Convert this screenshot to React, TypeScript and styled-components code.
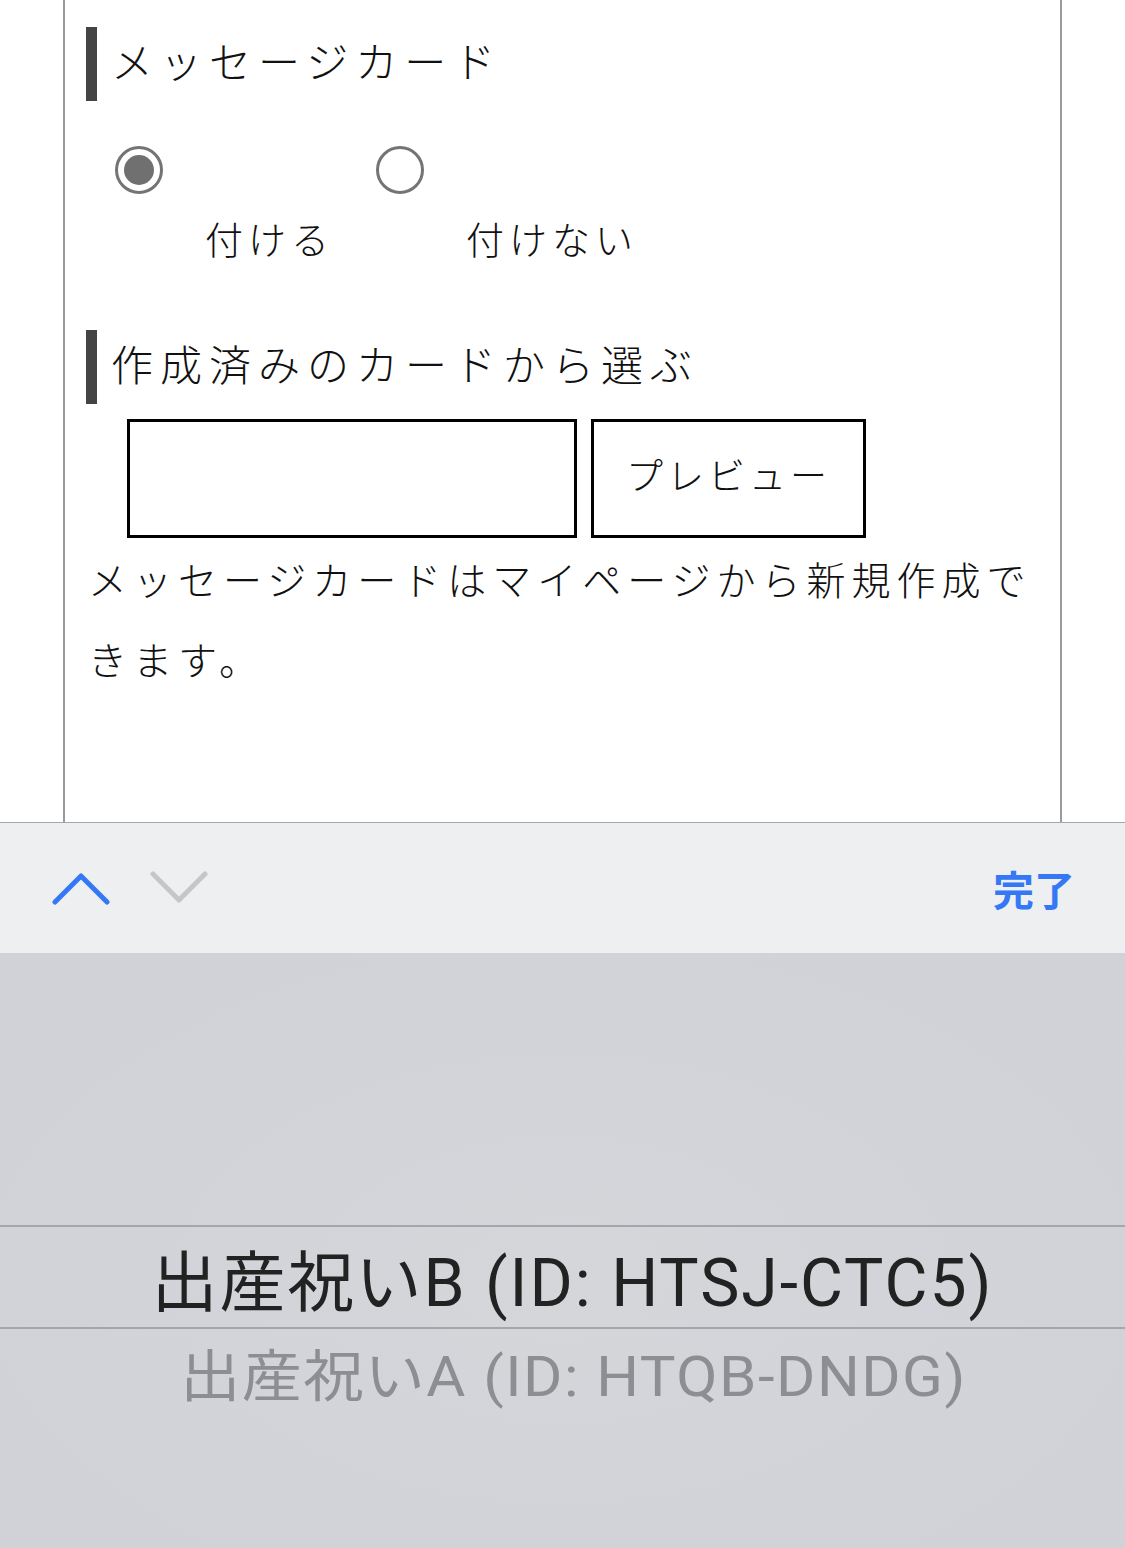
import React from 'react'
import styled, { createGlobalStyle } from 'styled-components'

const GlobalStyle = createGlobalStyle`
  body {
    margin: 0;
    background: #ffffff;
  }
`

const jp = `"Noto Sans CJK JP", "Noto Sans", sans-serif`

const Page = styled.div`
  width: 1125px;
  height: 1548px;
  display: flex;
  flex-direction: column;
  overflow: hidden;
  font-family: ${jp};
  color: #111;
`

const Viewport = styled.div`
  height: 822px;
  flex: none;
  padding-left: 63px;
  box-sizing: border-box;
`

const Card = styled.div`
  width: 999px;
  height: 100%;
  box-sizing: border-box;
  border-left: 2px solid #9b9b9b;
  border-right: 2px solid #9b9b9b;
  padding: 27px 21px 0 21px;
`

const Heading = styled.h2<{ $top?: number }>`
  margin: ${(p) => p.$top || 0}px 0 0 0;
  height: 74px;
  box-sizing: border-box;
  display: flex;
  align-items: center;
  border-left: 11px solid #444;
  padding: 0 0 8px 14px;
  font-size: 42px;
  font-weight: 300;
  letter-spacing: 7px;
  line-height: 1;
`

const RadioGroup = styled.div`
  display: flex;
  padding: 45px 0 0 29px;
`

const Option = styled.label`
  width: 261px;
  display: flex;
  flex-direction: column;
`

const Radio = styled.span<{ $checked?: boolean }>`
  width: 48px;
  height: 48px;
  box-sizing: border-box;
  border: 3px solid #747474;
  border-radius: 50%;
  display: flex;
  align-items: center;
  justify-content: center;
  &::after {
    content: '';
    width: 30px;
    height: 30px;
    border-radius: 50%;
    background: ${(p) => (p.$checked ? '#707070' : 'transparent')};
  }
`

const OptionText = styled.span`
  margin: 22px 0 0 90px;
  font-size: 38px;
  font-weight: 300;
  letter-spacing: 5px;
  line-height: 44px;
  white-space: nowrap;
`

const SelectRow = styled.div`
  display: flex;
  gap: 14px;
  margin: 15px 0 0 41px;
`

const Select = styled.div`
  width: 450px;
  height: 119px;
  box-sizing: border-box;
  border: 3px solid #000;
`

const PreviewButton = styled.button`
  width: 275px;
  height: 119px;
  box-sizing: border-box;
  border: 3px solid #000;
  background: #fff;
  font-family: ${jp};
  font-size: 37px;
  font-weight: 300;
  letter-spacing: 4px;
  color: #111;
  padding: 0 0 10px 0;
`

const Note = styled.p`
  margin: 0;
  padding-left: 2px;
  font-size: 39px;
  font-weight: 300;
  letter-spacing: 6px;
  line-height: 80px;
`

const Toolbar = styled.div`
  height: 131px;
  flex: none;
  box-sizing: border-box;
  border-top: 1px solid #a7a7aa;
  background: #eeeff1;
  display: flex;
  align-items: center;
  padding: 0 50px 0 52px;
`

const Arrows = styled.div`
  display: flex;
  gap: 40px;
  flex: 1;
`

const Done = styled.span`
  color: #3478f6;
  font-size: 41px;
  font-weight: 700;
  font-family: ${jp};
`

const Picker = styled.div`
  flex: 1;
  background: radial-gradient(ellipse at 50% 55%, #d4d6da 0%, #d1d3d8 60%, #d0d2d7 100%);
  padding-top: 272px;
  font-family: Roboto, "Noto Sans CJK JP", sans-serif;
`

const Selected = styled.div`
  height: 104px;
  box-sizing: border-box;
  border-top: 2px solid #a4a6ab;
  border-bottom: 2px solid #a4a6ab;
  display: flex;
  align-items: center;
  justify-content: center;
  padding-left: 20px;
  font-size: 66px;
  letter-spacing: 2px;
  color: #222;
`

const Row = styled.div`
  height: 84px;
  display: flex;
  align-items: center;
  justify-content: center;
  padding-left: 22px;
  font-size: 60px;
  letter-spacing: 1.5px;
  color: #8d8e92;
  transform: scaleY(0.92);
`

const Chevron: React.FC<{ up?: boolean; color: string }> = ({ up, color }) => (
  <svg width="58" height="34" viewBox="0 0 58 34">
    <polyline
      points={up ? '3,31 29,5 55,31' : '3,3 29,29 55,3'}
      fill="none"
      stroke={color}
      strokeWidth="5"
      strokeLinecap="round"
      strokeLinejoin="round"
    />
  </svg>
)

const App: React.FC = () => {
  return (
    <Page>
      <GlobalStyle />
      <Viewport>
        <Card>
          <Heading>メッセージカード</Heading>
          <RadioGroup>
            <Option>
              <Radio $checked />
              <OptionText>付ける</OptionText>
            </Option>
            <Option>
              <Radio />
              <OptionText>付けない</OptionText>
            </Option>
          </RadioGroup>
          <Heading $top={70}>作成済みのカードから選ぶ</Heading>
          <SelectRow>
            <Select />
            <PreviewButton>プレビュー</PreviewButton>
          </SelectRow>
          <Note>メッセージカードはマイページから新規作成できます。</Note>
        </Card>
      </Viewport>
      <Toolbar>
        <Arrows>
          <Chevron up color="#3478f6" />
          <Chevron color="#c6c6c8" />
        </Arrows>
        <Done>完了</Done>
      </Toolbar>
      <Picker>
        <Selected>出産祝いB (ID: HTSJ-CTC5)</Selected>
        <Row>出産祝いA (ID: HTQB-DNDG)</Row>
      </Picker>
    </Page>
  )
}

export default App
